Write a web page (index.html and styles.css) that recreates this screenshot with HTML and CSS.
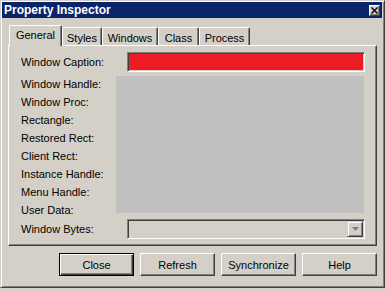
FILE: index.html
```html
<!DOCTYPE html>
<html>
<head>
<meta charset="utf-8">
<link rel="stylesheet" href="styles.css">
</head>
<body>
<div class="window">
  <div class="titlebar">
    <span class="title">Property Inspector</span>
    <span class="closebox"><svg width="7" height="7" viewBox="0 0 7 7"><path d="M0.5 0.5 L6.5 6.5 M6.5 0.5 L0.5 6.5" stroke="#000" stroke-width="1.4"/></svg></span>
  </div>
  <div class="tabs">
    <div class="tab selected w-general">General</div>
    <div class="tab w-styles">Styles</div>
    <div class="tab w-windows">Windows</div>
    <div class="tab w-class">Class</div>
    <div class="tab w-process">Process</div>
  </div>
  <div class="panel">
    <div class="row">
      <div class="label">Window Caption:</div>
      <div class="field sunken red"></div>
    </div>
    <div class="middle">
      <div class="labels">
        <div>Window Handle:</div>
        <div>Window Proc:</div>
        <div>Rectangle:</div>
        <div>Restored Rect:</div>
        <div>Client Rect:</div>
        <div>Instance Handle:</div>
        <div>Menu Handle:</div>
        <div>User Data:</div>
      </div>
      <div class="greybox"></div>
    </div>
    <div class="row bytes">
      <div class="label">Window Bytes:</div>
      <div class="field sunken combo">
        <span class="dropbtn"><svg width="7" height="4" viewBox="0 0 7 4"><path d="M0 0 L7 0 L3.5 4 Z" fill="#808080"/></svg></span>
      </div>
    </div>
  </div>
  <div class="buttons">
    <button class="btn default">Close</button>
    <button class="btn">Refresh</button>
    <button class="btn">Synchronize</button>
    <button class="btn">Help</button>
  </div>
</div>
</body>
</html>
```
FILE: styles.css
```css
* { box-sizing: border-box; }
html, body { margin: 0; padding: 0; }
body {
  width: 385px;
  height: 291px;
  overflow: hidden;
  background: #d4d0c8;
  font-family: "Liberation Sans", Arial, sans-serif;
  font-size: 11px;
  color: #000;
}
.window {
  width: 385px;
  height: 288px;
  background: #d4d0c8;
  border: 1px solid;
  border-color: #d4d0c8 #404040 #404040 #d4d0c8;
  box-shadow: inset 1px 1px #fff, inset -1px -1px #808080;
  padding: 1px 2px 0 1px;
  display: flex;
  flex-direction: column;
}
.titlebar {
  height: 16px;
  background: #0a246a;
  display: flex;
  align-items: center;
  justify-content: space-between;
  padding-left: 2px;
}
.title {
  color: #fff;
  font-weight: bold;
  font-size: 12px;
  line-height: 16px;
}
.closebox {
  width: 11px;
  height: 11px;
  margin-right: 2px;
  background: #d4d0c8;
  border: 1px solid;
  border-color: #fff #404040 #404040 #fff;
  box-shadow: inset -1px -1px #808080;
  display: flex;
  align-items: center;
  justify-content: center;
}
.closebox svg { display: block; }
.tabs {
  height: 27px;
  display: flex;
  align-items: flex-end;
  padding-left: 7px;
}
.tab {
  height: 18px;
  border: 1px solid;
  border-bottom: none;
  border-color: #fff #404040 #404040 #fff;
  border-radius: 2px 2px 0 0;
  box-shadow: inset -1px 0 #808080;
  text-align: center;
  line-height: 18px;
  padding-top: 1px;
  background: #d4d0c8;
}
.tab.selected {
  height: 21px;
  margin-bottom: -1px;
  position: relative;
  z-index: 1;
  line-height: 19px;
  padding-top: 0;
}
.w-general { width: 53px; }
.w-styles { width: 40px; }
.w-windows { width: 56px; }
.w-class { width: 41px; }
.w-process { width: 51px; }
.panel {
  margin-left: 6px;
  width: 369px;
  height: 201px;
  border: 1px solid;
  border-color: #fff #404040 #404040 #fff;
  box-shadow: inset -1px -1px #808080;
  padding: 6px 0 0 12px;
}
.row {
  display: flex;
  align-items: center;
  height: 20px;
}
.label {
  width: 106px;
  white-space: nowrap;
}
.field {
  width: 238px;
  height: 20px;
}
.sunken {
  border: 1px solid;
  border-color: #808080 #fff #fff #808080;
  box-shadow: inset 1px 1px #404040, inset -1px -1px #d4d0c8;
}
.red { background: #ed1c24; }
.middle {
  margin-top: 4px;
  height: 137px;
  display: flex;
  align-items: flex-start;
}
.labels {
  width: 95px;
  margin-top: -1px;
  line-height: 18px;
  white-space: nowrap;
}
.greybox {
  width: 248px;
  height: 137px;
  background: #c0c0c0;
}
.bytes { margin-top: 6px; }
.combo {
  background: #d4d0c8;
  display: flex;
  justify-content: flex-end;
  padding: 1px;
}
.dropbtn {
  width: 16px;
  height: 16px;
  border: 1px solid;
  border-color: #d4d0c8 #404040 #404040 #d4d0c8;
  box-shadow: inset 1px 1px #fff, inset -1px -1px #808080;
  display: flex;
  align-items: center;
  justify-content: center;
}
.dropbtn svg { display: block; }
.buttons {
  margin-top: 7px;
  display: flex;
  gap: 6px;
  padding-left: 57px;
}
.btn {
  width: 75px;
  height: 23px;
  margin: 0;
  padding: 0;
  background: #d4d0c8;
  font-family: "Liberation Sans", Arial, sans-serif;
  font-size: 11px;
  color: #000;
  border: 1px solid;
  border-color: #fff #404040 #404040 #fff;
  box-shadow: inset -1px -1px #808080;
  border-radius: 0;
}
.btn.default {
  border-color: #000;
  box-shadow: inset 1px 1px #fff, inset -1px -1px #404040, inset -2px -2px #808080;
}
```
